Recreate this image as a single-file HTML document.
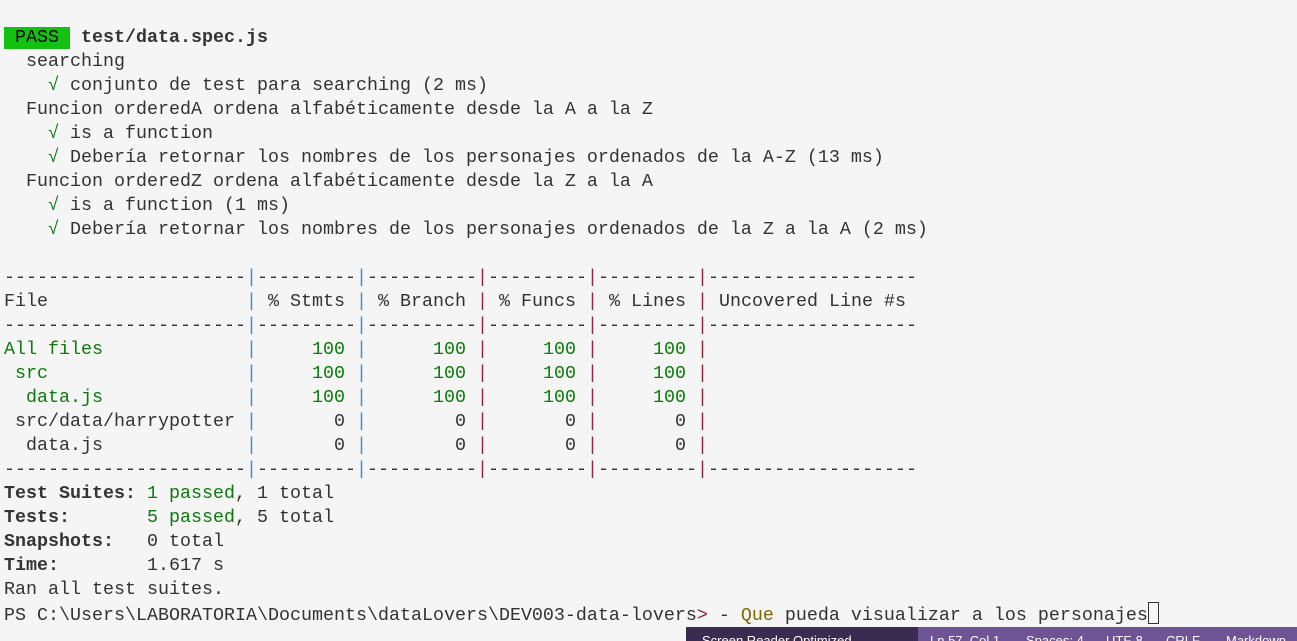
<!DOCTYPE html>
<html><head><meta charset="utf-8"><style>
html,body{margin:0;padding:0;width:1297px;height:641px;overflow:hidden;background:#f5f5f5}
pre{margin:0;position:absolute;left:4px;top:26px;font-family:"Liberation Mono",monospace;font-size:18.33px;line-height:24px;color:#333;white-space:pre}
.pass{background:#13c113;color:#000;display:inline-block;line-height:22px}
.g{color:#0a7a0a}
.b{font-weight:bold}
.p{color:#3b8ed8}
.r{color:#8b2a3a}
.y{color:#7a6a00}
.cur{display:inline-block;width:9px;height:20px;border:1px solid #333;vertical-align:-4px}
.sb{position:absolute;left:686px;top:627px;width:611px;height:14px;background:#6e5494;overflow:hidden}
.sb .d{position:absolute;left:0;top:0;width:232px;height:14px;background:#3a2c50}
.sb span{position:absolute;top:6px;font:13px "Liberation Sans",sans-serif;color:#fff;white-space:nowrap}
</style></head><body>
<pre><span class="pass"> PASS </span> <span class="b">test/data.spec.js</span>
  searching
    <span class="g">√</span> conjunto de test para searching (2 ms)
  Funcion orderedA ordena alfabéticamente desde la A a la Z
    <span class="g">√</span> is a function
    <span class="g">√</span> Debería retornar los nombres de los personajes ordenados de la A-Z (13 ms)
  Funcion orderedZ ordena alfabéticamente desde la Z a la A
    <span class="g">√</span> is a function (1 ms)
    <span class="g">√</span> Debería retornar los nombres de los personajes ordenados de la Z a la A (2 ms)

----------------------<span class="p">|</span>---------<span class="p">|</span>----------<span class="r">|</span>---------<span class="r">|</span>---------<span class="r">|</span>-------------------
File                  <span class="p">|</span> % Stmts <span class="p">|</span> % Branch <span class="r">|</span> % Funcs <span class="r">|</span> % Lines <span class="r">|</span> Uncovered Line #s 
----------------------<span class="p">|</span>---------<span class="p">|</span>----------<span class="r">|</span>---------<span class="r">|</span>---------<span class="r">|</span>-------------------
<span class="g">All files</span>             <span class="p">|</span>     <span class="g">100</span> <span class="p">|</span>      <span class="g">100</span> <span class="r">|</span>     <span class="g">100</span> <span class="r">|</span>     <span class="g">100</span> <span class="r">|</span>                   
 <span class="g">src</span>                  <span class="p">|</span>     <span class="g">100</span> <span class="p">|</span>      <span class="g">100</span> <span class="r">|</span>     <span class="g">100</span> <span class="r">|</span>     <span class="g">100</span> <span class="r">|</span>                   
  <span class="g">data.js</span>             <span class="p">|</span>     <span class="g">100</span> <span class="p">|</span>      <span class="g">100</span> <span class="r">|</span>     <span class="g">100</span> <span class="r">|</span>     <span class="g">100</span> <span class="r">|</span>                   
 src/data/harrypotter <span class="p">|</span>       0 <span class="p">|</span>        0 <span class="r">|</span>       0 <span class="r">|</span>       0 <span class="r">|</span>                   
  data.js             <span class="p">|</span>       0 <span class="p">|</span>        0 <span class="r">|</span>       0 <span class="r">|</span>       0 <span class="r">|</span>                   
----------------------<span class="p">|</span>---------<span class="p">|</span>----------<span class="r">|</span>---------<span class="r">|</span>---------<span class="r">|</span>-------------------
<span class="b">Test Suites:</span> <span class="g">1 passed</span>, 1 total
<span class="b">Tests:</span>       <span class="g">5 passed</span>, 5 total
<span class="b">Snapshots:</span>   0 total
<span class="b">Time:</span>        1.617 s
Ran all test suites.
PS C:\Users\LABORATORIA\Documents\dataLovers\DEV003-data-lovers<span class="r">&gt;</span> - <span class="y">Que</span> pueda visualizar a los personajes<span class="cur"></span></pre>
<div class="sb"><div class="d"></div><span style="left:16px">Screen Reader Optimized</span><span style="left:244px">Ln 57, Col 1</span><span style="left:340px">Spaces: 4</span><span style="left:420px">UTF-8</span><span style="left:480px">CRLF</span><span style="left:540px">Markdown</span></div>
</body></html>
